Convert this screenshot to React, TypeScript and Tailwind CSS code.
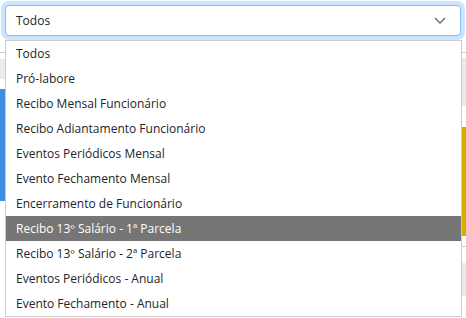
import { useState } from 'react';

const OPCOES = [
  'Todos',
  'Pró-labore',
  'Recibo Mensal Funcionário',
  'Recibo Adiantamento Funcionário',
  'Eventos Periódicos Mensal',
  'Evento Fechamento Mensal',
  'Encerramento de Funcionário',
  'Recibo 13º Salário - 1ª Parcela',
  'Recibo 13º Salário - 2ª Parcela',
  'Eventos Periódicos - Anual',
  'Evento Fechamento - Anual',
];

export default function App() {
  const [selecionado] = useState('Todos');
  const [hover] = useState(7);

  return (
    <div className="relative w-[466px] h-[318px] overflow-hidden bg-white font-['Open_Sans',sans-serif] text-[12px] text-[#212529]">
      {/* select */}
      <div className="p-[5px] h-[40px]">
        <div className="flex items-center justify-between h-[31px] pl-[10px] pr-[14px] bg-white border border-[#80bdff] rounded-[4px] shadow-[0_0_0_4px_rgba(0,123,255,0.2)]">
          <span>{selecionado}</span>
          <svg width="12" height="7" viewBox="0 0 12 7" fill="none" stroke="#6c757d" strokeWidth="1.5">
            <path d="M1 1l5 5 5-5" />
          </svg>
        </div>
      </div>

      {/* conteúdo da página por trás */}
      <div className="mt-[12px] border-t border-[#cfcfcf] flex">
        <div className="flex-1 flex flex-col">
          <div className="mt-[6px] h-[20px] bg-[#e9ecef]" />
          <div className="mt-[10px] h-[112px] bg-[#3d8fe0]" />
        </div>
        <div className="flex-1 flex flex-col items-end">
          <div className="mt-[5px] h-[48px] w-full bg-[#e9ecef]" />
          <div className="mt-[21px] h-[109px] w-full bg-[#d1b000]" />
          <div className="mt-[10px] w-full border-t border-[#cfcfcf]" />
          <div className="mt-[16px] h-[33px] w-full bg-[#e9ecef]" />
        </div>
      </div>

      {/* lista aberta */}
      <ul className="absolute left-[5px] top-[40px] w-[457px] bg-white border border-[#cccccc]">
        {OPCOES.map((op, i) => (
          <li
            key={op}
            className={`h-[25px] flex items-center pl-[10px] ${
              i === hover ? 'bg-[#767676] text-white' : ''
            }`}
          >
            {op}
          </li>
        ))}
      </ul>
    </div>
  );
}
